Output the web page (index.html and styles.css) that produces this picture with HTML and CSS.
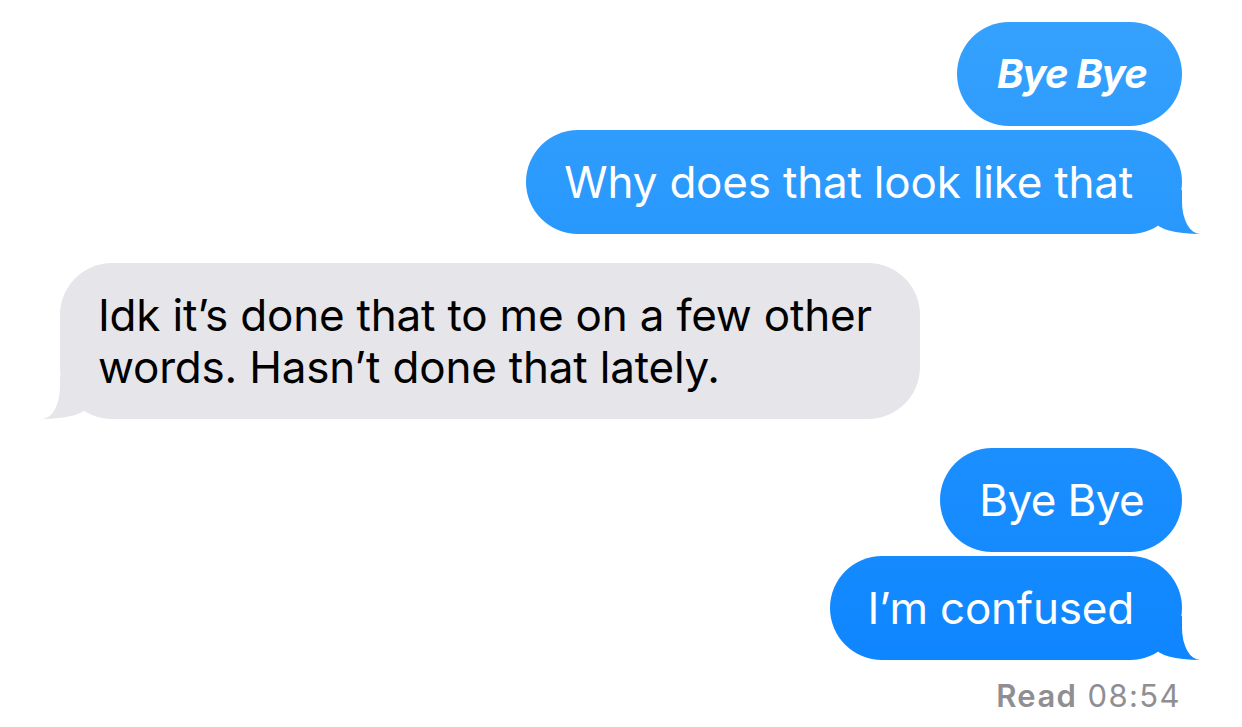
FILE: index.html
```html
<!DOCTYPE html>
<html lang="en">
<head>
	<meta charset="UTF-8" />
	<meta name="viewport" content="width=device-width, initial-scale=1.0" />
	<title>Messages</title>
	<link rel="stylesheet" href="styles.css">
</head>
<body>
	<div class="chat">
		<div class="bubble sent effect">Bye Bye</div>
		<div class="bubble sent tail">Why does that look like that</div>

		<div class="bubble received tail">Idk it’s done that to me on a few other<br>words. Hasn’t done that lately.</div>

		<div class="bubble sent short">Bye Bye</div>
		<div class="bubble sent tail last">I’m confused</div>

		<div class="status"><b>Read</b> 08:54</div>
	</div>
</body>
</html>
```

FILE: styles.css
```css
body {
	margin: 0;
	background: #fff;
	font-family: Inter, "Noto Sans", sans-serif;
	color: #000;
}

.chat {
	display: flex;
	flex-direction: column;
	padding: 22px 60px 0;
}

.bubble {
	position: relative;
	font-size: 44px;
	line-height: 52px;
	padding: 26px 49px 26px 38px;
	border-radius: 52px;
	width: fit-content;
	letter-spacing: -0.2px;
}

.sent {
	align-self: flex-end;
	color: #fff;
	background: linear-gradient(#37a2fd, #0a83ff) fixed;
	margin-top: 4px;
}

.sent.effect {
	font-weight: bold;
	font-style: italic;
	font-size: 40px;
	letter-spacing: -0.9px;
	margin-top: 0;
	padding-left: 40px;
	padding-right: 35px;
}

.sent.short {
	padding-left: 39px;
	padding-right: 38px;
	letter-spacing: -0.6px;
}

.sent.last {
	padding-left: 37px;
	padding-right: 48px;
}

.received {
	align-self: flex-start;
	background: #e5e5ea;
	margin: 29px 0;
	padding: 26px 48px 26px 38px;
}

.received + .sent {
	margin-top: 0;
}

/* bubble tails */
.tail::before,
.tail::after {
	content: "";
	position: absolute;
	bottom: 0;
}

.sent.tail::before {
	right: -18px;
	width: 44px;
	height: 44px;
	background: linear-gradient(#37a2fd, #0a83ff) fixed;
	border-bottom-left-radius: 44px 12px;
}

.sent.tail::after {
	right: -40px;
	width: 40px;
	height: 46px;
	background: #fff;
	border-bottom-left-radius: 18px 32px;
}

.received.tail::before {
	left: -18px;
	width: 44px;
	height: 44px;
	background: #e5e5ea;
	border-bottom-right-radius: 44px 12px;
}

.received.tail::after {
	left: -40px;
	width: 40px;
	height: 46px;
	background: #fff;
	border-bottom-right-radius: 18px 32px;
}

.status {
	align-self: flex-end;
	margin-top: 18px;
	font-size: 31px;
	line-height: 36px;
	letter-spacing: 1.4px;
	color: #8e8e93;
	margin-right: 1px;
}

.status b {
	font-weight: 600;
}
```
